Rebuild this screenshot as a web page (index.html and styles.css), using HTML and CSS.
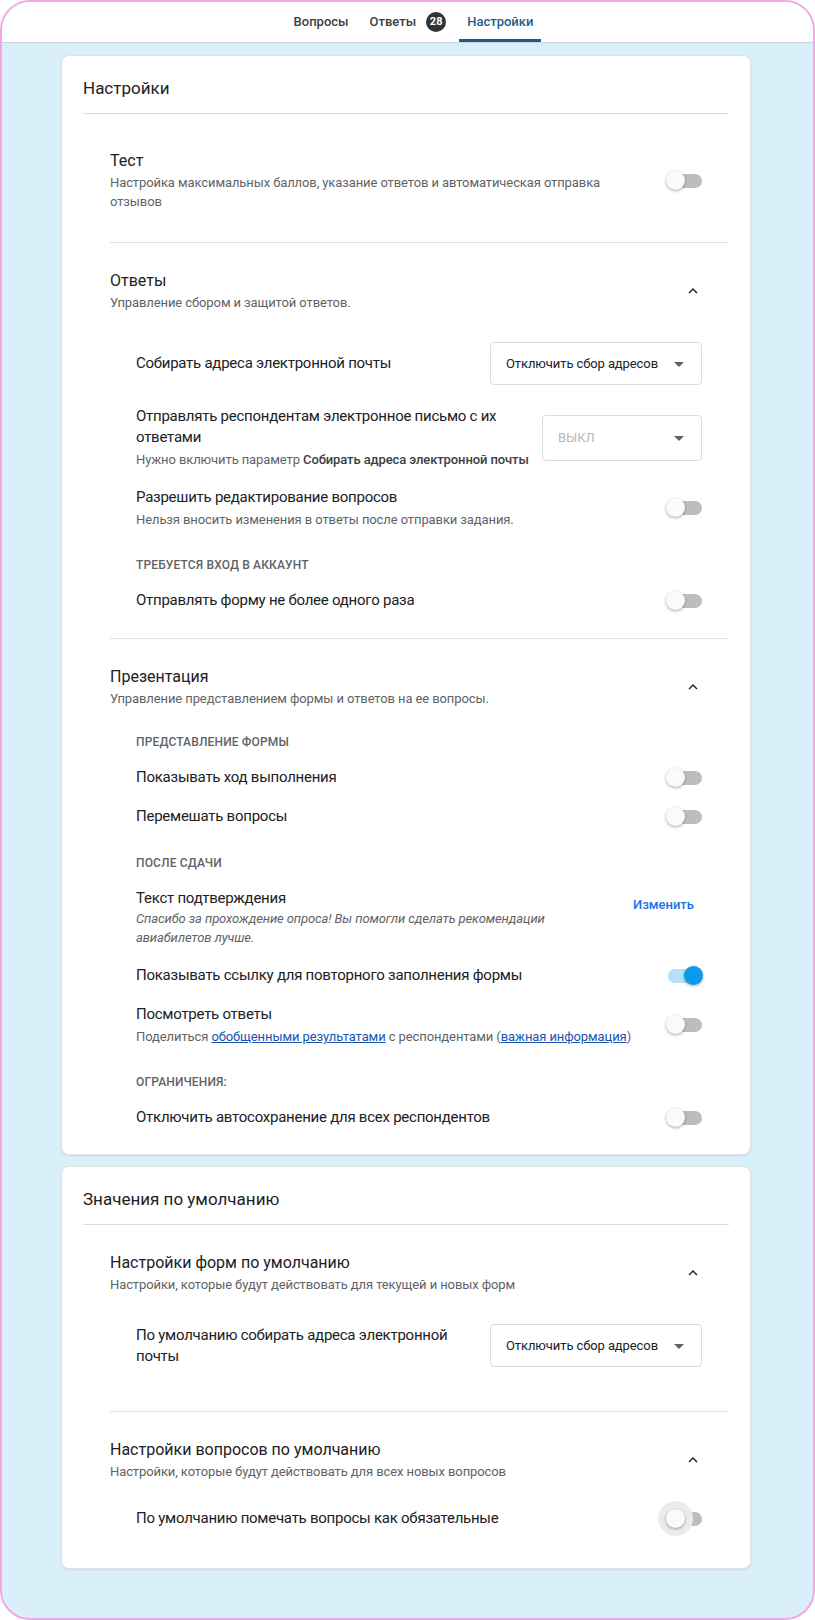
FILE: index.html
```html
<!DOCTYPE html>
<html lang="ru">
<head>
  <meta charset="UTF-8">
  <meta name="viewport" content="width=device-width, initial-scale=1.0">
  <title>Настройки формы</title>
  <link rel="stylesheet" href="styles.css">
</head>
<body>
  <div class="frame">
    <!-- Вкладки редактора формы -->
    <header class="tabs">
      <a class="tab">Вопросы</a>
      <a class="tab">Ответы <span class="badge">28</span></a>
      <a class="tab tab--active">Настройки</a>
    </header>

    <main class="content">
      <!-- Основные настройки -->
      <section class="card">
        <h2 class="card-title">Настройки</h2>

        <div class="group group--quiz">
          <div class="group-head">
            <div class="group-text group-text--narrow">
              <div class="group-title">Тест</div>
              <div class="group-desc">Настройка максимальных баллов, указание ответов и автоматическая отправка отзывов</div>
            </div>
            <span class="switch"></span>
          </div>
        </div>

        <div class="group">
          <div class="group-head">
            <div class="group-text">
              <div class="group-title">Ответы</div>
              <div class="group-desc">Управление сбором и защитой ответов.</div>
            </div>
            <span class="chevron">
              <svg viewBox="0 0 24 24" width="20" height="20"><path d="M7.41 15.41 12 10.83l4.59 4.58L18 14l-6-6-6 6z"/></svg>
            </span>
          </div>
          <div class="items">
            <div class="item item--select">
              <div class="item-text">
                <div class="item-label">Собирать адреса электронной почты</div>
              </div>
              <div class="select select--wide">
                <span>Отключить сбор адресов</span>
                <svg viewBox="0 0 24 24" width="24" height="24"><path d="M7 10l5 5 5-5z"/></svg>
              </div>
            </div>
            <div class="item item--select">
              <div class="item-text">
                <div class="item-label">Отправлять респондентам электронное письмо с их ответами</div>
                <div class="item-desc">Нужно включить параметр <b>Собирать адреса электронной почты</b></div>
              </div>
              <div class="select select--off">
                <span>ВЫКЛ</span>
                <svg viewBox="0 0 24 24" width="24" height="24"><path d="M7 10l5 5 5-5z"/></svg>
              </div>
            </div>
            <div class="item">
              <div class="item-text">
                <div class="item-label">Разрешить редактирование вопросов</div>
                <div class="item-desc">Нельзя вносить изменения в ответы после отправки задания.</div>
              </div>
              <span class="switch"></span>
            </div>
            <div class="caption">Требуется вход в аккаунт</div>
            <div class="item">
              <div class="item-text">
                <div class="item-label">Отправлять форму не более одного раза</div>
              </div>
              <span class="switch"></span>
            </div>
          </div>
        </div>

        <div class="group group--last">
          <div class="group-head">
            <div class="group-text">
              <div class="group-title">Презентация</div>
              <div class="group-desc">Управление представлением формы и ответов на ее вопросы.</div>
            </div>
            <span class="chevron">
              <svg viewBox="0 0 24 24" width="20" height="20"><path d="M7.41 15.41 12 10.83l4.59 4.58L18 14l-6-6-6 6z"/></svg>
            </span>
          </div>
          <div class="items">
            <div class="caption">Представление формы</div>
            <div class="item">
              <div class="item-text"><div class="item-label">Показывать ход выполнения</div></div>
              <span class="switch"></span>
            </div>
            <div class="item">
              <div class="item-text"><div class="item-label">Перемешать вопросы</div></div>
              <span class="switch"></span>
            </div>
            <div class="caption">После сдачи</div>
            <div class="item">
              <div class="item-text">
                <div class="item-label">Текст подтверждения</div>
                <div class="item-quote">Спасибо за прохождение опроса! Вы помогли сделать рекомендации авиабилетов лучше.</div>
              </div>
              <a class="text-btn">Изменить</a>
            </div>
            <div class="item">
              <div class="item-text"><div class="item-label">Показывать ссылку для повторного заполнения формы</div></div>
              <span class="switch switch--on"></span>
            </div>
            <div class="item">
              <div class="item-text">
                <div class="item-label">Посмотреть ответы</div>
                <div class="item-desc">Поделиться <a class="link">обобщенными результатами</a> с респондентами (<a class="link">важная информация</a>)</div>
              </div>
              <span class="switch"></span>
            </div>
            <div class="caption">Ограничения:</div>
            <div class="item">
              <div class="item-text"><div class="item-label">Отключить автосохранение для всех респондентов</div></div>
              <span class="switch"></span>
            </div>
          </div>
        </div>
      </section>

      <!-- Значения по умолчанию -->
      <section class="card">
        <h2 class="card-title">Значения по умолчанию</h2>

        <div class="group group--forms">
          <div class="group-head">
            <div class="group-text">
              <div class="group-title">Настройки форм по умолчанию</div>
              <div class="group-desc">Настройки, которые будут действовать для текущей и новых форм</div>
            </div>
            <span class="chevron">
              <svg viewBox="0 0 24 24" width="20" height="20"><path d="M7.41 15.41 12 10.83l4.59 4.58L18 14l-6-6-6 6z"/></svg>
            </span>
          </div>
          <div class="items">
            <div class="item item--select">
              <div class="item-text">
                <div class="item-label">По умолчанию собирать адреса электронной почты</div>
              </div>
              <div class="select select--wide">
                <span>Отключить сбор адресов</span>
                <svg viewBox="0 0 24 24" width="24" height="24"><path d="M7 10l5 5 5-5z"/></svg>
              </div>
            </div>
          </div>
        </div>

        <div class="group group--end">
          <div class="group-head">
            <div class="group-text">
              <div class="group-title">Настройки вопросов по умолчанию</div>
              <div class="group-desc">Настройки, которые будут действовать для всех новых вопросов</div>
            </div>
            <span class="chevron">
              <svg viewBox="0 0 24 24" width="20" height="20"><path d="M7.41 15.41 12 10.83l4.59 4.58L18 14l-6-6-6 6z"/></svg>
            </span>
          </div>
          <div class="items">
            <div class="item">
              <div class="item-text"><div class="item-label">По умолчанию помечать вопросы как обязательные</div></div>
              <span class="switch switch--focus"></span>
            </div>
          </div>
        </div>
      </section>
    </main>
  </div>
</body>
</html>
```

FILE: styles.css
```css
/* Общая рамка страницы */
body {
  margin: 0;
  font-family: Roboto, "Noto Sans", Arial, sans-serif;
  color: #202124;
}

.frame {
  box-sizing: border-box;
  height: 1620px;
  border: 2px solid #f3a8e4;
  border-radius: 30px;
  background: #d9f0fb;
  overflow: hidden;
}

/* Вкладки */
.tabs {
  display: flex;
  justify-content: center;
  align-items: flex-end;
  gap: 5px;
  height: 40px;
  padding-left: 12px;
  background: #fff;
  border-bottom: 1px solid #c9d6de;
}

.tab {
  display: flex;
  align-items: center;
  box-sizing: border-box;
  height: 38px;
  padding: 0 8px 3px;
  font-size: 13px;
  font-weight: 500;
  color: #3c4043;
}

.tab--active {
  color: #1c5d8a;
  border-bottom: 3px solid #1c5d8a;
  border-radius: 3px 3px 0 0;
  padding-bottom: 0;
}

.badge {
  display: inline-flex;
  align-items: center;
  justify-content: center;
  width: 20px;
  height: 20px;
  margin-left: 10px;
  border-radius: 50%;
  background: #333;
  color: #fff;
  font-size: 11px;
  font-weight: 700;
}

/* Карточки */
.content {
  padding-top: 12px;
}

.card {
  width: 690px;
  margin: 0 0 11px 59px;
  box-sizing: border-box;
  padding: 20px 21px 0 21px;
  background: #fff;
  border: 1px solid #dfe3e6;
  border-radius: 8px;
  box-shadow: 0 1px 2px rgba(60, 64, 67, 0.12);
}

.card-title {
  margin: 0;
  padding-bottom: 13px;
  font-size: 17px;
  line-height: 24px;
  font-weight: 400;
  border-bottom: 1px solid #dadce0;
}

/* Группы настроек */
.group {
  margin-left: 27px;
  padding: 27px 27px 27px 0;
  border-top: 1px solid #e0e0e0;
}

.card-title + .group {
  border-top: none;
}

.group--quiz {
  padding-top: 36px;
  padding-bottom: 31px;
}

.group--last {
  padding-bottom: 26px;
}

.group--forms {
  padding-bottom: 44px;
}

.group--end {
  padding-bottom: 39px;
}

.group-head {
  display: flex;
  align-items: center;
  justify-content: space-between;
  gap: 30px;
}

.group-text--narrow {
  max-width: 510px;
}

.group-title {
  font-size: 16px;
  line-height: 22px;
}

.group-desc {
  margin-top: 1px;
  font-size: 13px;
  line-height: 19px;
  letter-spacing: -0.1px;
  color: #5f6368;
}

.chevron {
  display: flex;
  justify-content: center;
  width: 18px;
}

.chevron svg {
  fill: #202124;
}

/* Пункты внутри группы */
.items {
  display: flex;
  flex-direction: column;
  gap: 18px;
  padding: 27px 0 0 26px;
}

.item {
  display: flex;
  align-items: center;
  justify-content: space-between;
  gap: 8px;
}

.item--select {
  margin-top: 3px;
}

.item-label {
  font-size: 15px;
  line-height: 21px;
  letter-spacing: -0.25px;
}

.item-desc {
  margin-top: 2px;
  font-size: 13px;
  line-height: 19px;
  letter-spacing: -0.1px;
  color: #5f6368;
}

.item-desc b {
  font-weight: 500;
  color: #3c4043;
}

.item-quote {
  max-width: 440px;
  font-size: 13px;
  line-height: 19px;
  letter-spacing: -0.1px;
  font-style: italic;
  color: #5f6368;
}

.caption {
  margin-top: 11px;
  font-size: 12px;
  line-height: 14px;
  font-weight: 500;
  letter-spacing: 0.15px;
  text-transform: uppercase;
  color: #5f6368;
}

.caption:first-child {
  margin-top: 0;
}

.link {
  color: #1a54b0;
  text-decoration: underline;
}

.text-btn {
  align-self: flex-start;
  margin: 9px 8px 0 0;
  font-size: 13px;
  font-weight: 500;
  color: #1a73e8;
}

/* Выпадающие списки */
.select {
  display: flex;
  align-items: center;
  justify-content: space-between;
  flex-shrink: 0;
  box-sizing: border-box;
  width: 160px;
  height: 46px;
  padding: 0 10px 0 15px;
  border: 1px solid #dadce0;
  border-radius: 4px;
  font-size: 13px;
  letter-spacing: -0.1px;
  white-space: nowrap;
  color: #202124;
}

.select--wide {
  width: 212px;
  height: 43px;
}

.select svg {
  fill: #5f6368;
}

.select--off {
  color: #b5b8bb;
}

/* Переключатели */
.switch {
  position: relative;
  flex-shrink: 0;
  width: 34px;
  height: 14px;
  border-radius: 7px;
  background: #bdbdbd;
}

.switch::after {
  content: "";
  position: absolute;
  left: -2px;
  top: -3px;
  width: 19px;
  height: 19px;
  border-radius: 50%;
  background: #fafafa;
  box-shadow: 0 1px 3px rgba(0, 0, 0, 0.35);
}

.switch--on {
  background: #b3e1fb;
}

.switch--on::after {
  left: auto;
  right: -1px;
  background: #0a9bec;
}

.switch--focus::before {
  content: "";
  position: absolute;
  left: -10px;
  top: -11px;
  width: 35px;
  height: 35px;
  border-radius: 50%;
  background: #ebebeb;
}
```
